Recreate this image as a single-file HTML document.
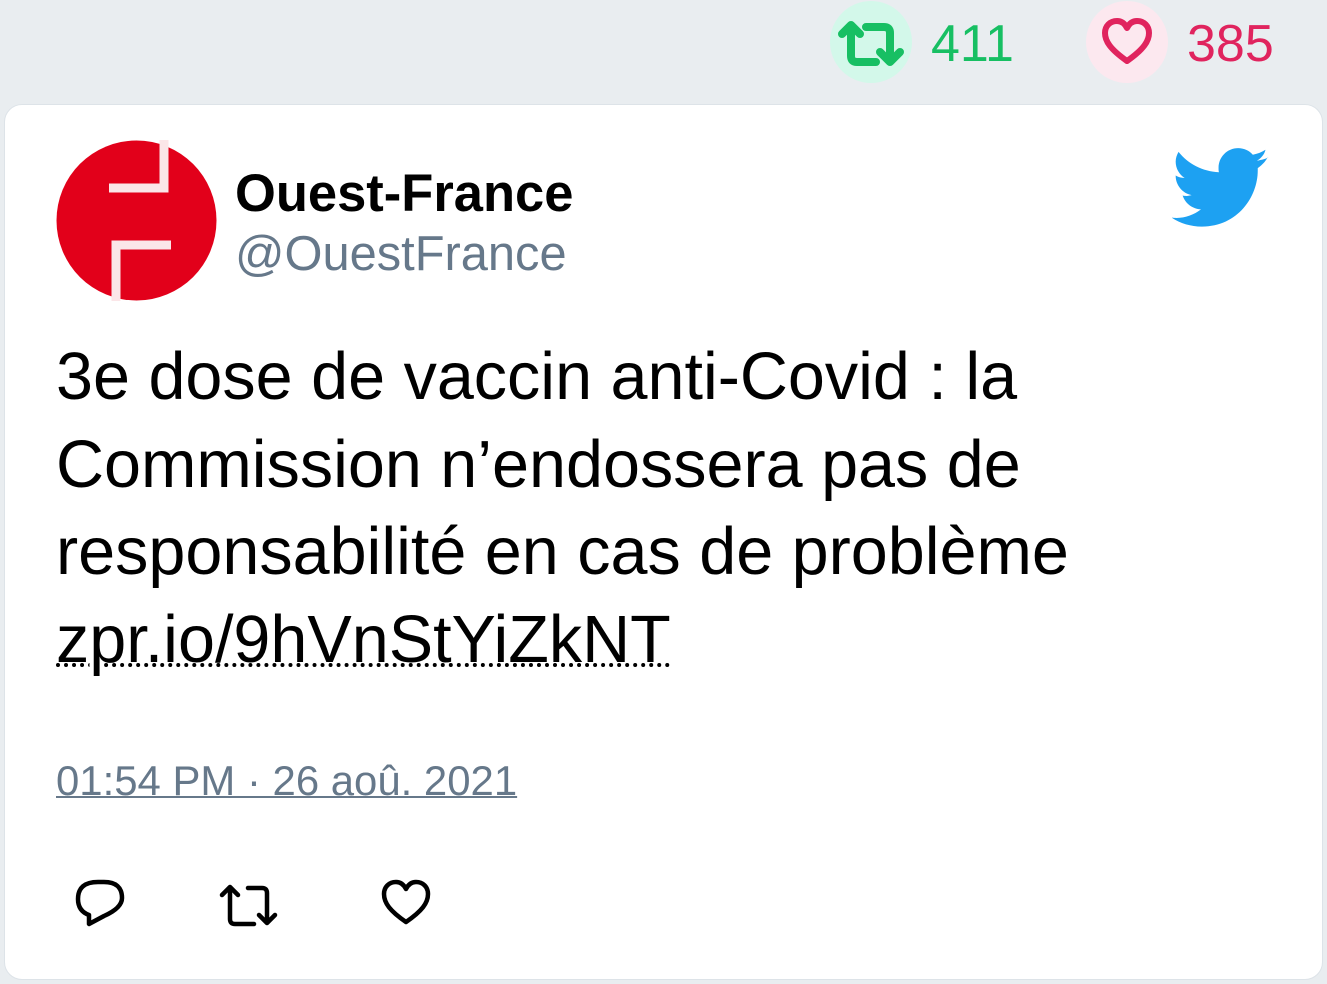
<!DOCTYPE html>
<html><head><meta charset="utf-8"><style>
html,body{margin:0;padding:0;width:1327px;height:984px;overflow:hidden;background:#e9edf0;font-family:"Liberation Sans",sans-serif}
.card{position:absolute;left:4px;top:104px;width:1319px;height:876px;background:#fff;border-radius:18px;border:1px solid #dde3e8;box-sizing:border-box}
.abs{position:absolute}
</style></head><body>
<div class="abs" style="left:830px;top:1px;width:82px;height:82px;border-radius:50%;background:#d3f8ea"></div>
<svg class="abs" style="left:836px;top:20px" width="70" height="48" viewBox="0 0 70 48" fill="none" stroke="#17bf63" stroke-width="8" stroke-linecap="round" stroke-linejoin="round">
<path d="M6 14 L15 5 L24 14 M15 6 V36 Q15 42 21 42 H40"/><path d="M30 7 H48 Q54 7 54 13 V40 M44 32 L54 42 L64 32"/></svg>
<div class="abs" style="left:931px;top:14px;font-size:52px;color:#17bf63">411</div>
<div class="abs" style="left:1086px;top:1px;width:82px;height:82px;border-radius:50%;background:#fce8ef"></div>
<svg class="abs" style="left:1100px;top:17px" width="54" height="50" viewBox="0 0 54 50"><path d="M27 44 C10 32 5 24 5 16 C5 9 10 4 17 4 C22 4 25 7 27 11 C29 7 32 4 37 4 C44 4 49 9 49 16 C49 24 44 32 27 44Z" fill="none" stroke="#e0245e" stroke-width="6" stroke-linejoin="round"/></svg>
<div class="abs" style="left:1187px;top:14px;font-size:52px;color:#e0245e">385</div>

<div class="card"></div>
<svg class="abs" style="left:56px;top:140px" width="161" height="161" viewBox="0 0 161 161">
<circle cx="80.5" cy="80.5" r="80" fill="#e2001a"/>
<path d="M53 48 H108 V0" fill="none" stroke="#fbe6e8" stroke-width="9"/>
<path d="M115 105 H60 V161" fill="none" stroke="#fbe6e8" stroke-width="9"/>
</svg>
<div class="abs" style="left:235px;top:163px;font-size:52.5px;font-weight:bold;color:#000">Ouest-France</div>
<div class="abs" style="left:235px;top:226px;font-size:48.8px;color:#66788a">@OuestFrance</div>
<svg class="abs" style="left:1172px;top:147px" width="98" height="84" viewBox="0 0 24 20"><path fill="#1da1f2" d="M23.6 2.3c-.9.4-1.8.6-2.8.8 1-.6 1.8-1.5 2.1-2.7-.9.6-2 1-3.1 1.2C18.9.6 17.6 0 16.2 0c-2.7 0-4.8 2.2-4.8 4.8 0 .4 0 .8.1 1.1C7.5 5.7 3.9 3.8 1.6.9c-.4.7-.7 1.5-.7 2.4 0 1.7.9 3.2 2.2 4-.8 0-1.5-.2-2.2-.6v.1c0 2.3 1.700 4.3 3.9 4.7-.4.1-.8.2-1.3.2-.3 0-.6 0-.9-.1.6 1.9 2.4 3.3 4.5 3.4-1.7 1.3-3.8 2.1-6 2.1-.4 0-.8 0-1.2-.1 2.1 1.4 4.7 2.200 7.4 2.2 8.9 0 13.7-7.4 13.7-13.7v-.6c1-.7 1.8-1.5 2.4-2.6z"/></svg>
<div class="abs" style="left:56px;top:334px;font-size:66.5px;line-height:87.5px;color:#000;width:1250px">3e dose de vaccin anti-Covid : la<br>Commission n’endossera pas de<br>responsabilité en cas de problème<br><span style="text-decoration:underline dotted;text-decoration-thickness:4px;text-underline-offset:2px">zpr.io/9hVnStYiZkNT</span></div>
<div class="abs" style="left:56px;top:757px;font-size:41.9px;color:#66788a;text-decoration:underline;text-decoration-thickness:2px">01:54 PM · 26 aoû. 2021</div>
<svg class="abs" style="left:74px;top:878px" width="54" height="54" viewBox="0 0 54 54" fill="none" stroke="#000" stroke-width="4.5" stroke-linejoin="round"><path d="M24 4 H30 Q48 4 48 20 Q48 30 30 38 L15 46 V37 Q4 33 4 21 Q4 4 24 4Z"/></svg>
<svg class="abs" style="left:218px;top:882px" width="66" height="48" viewBox="0 0 66 48" fill="none" stroke="#000" stroke-width="4.5" stroke-linecap="round" stroke-linejoin="round"><path d="M4 13 L12 5 L20 13 M12 6 V37 Q12 42 17 42 H36"/><path d="M30 6 H44 Q49 6 49 11 V40 M41 33 L49 41 L57 33"/></svg>
<svg class="abs" style="left:380px;top:878px" width="52" height="50" viewBox="0 0 52 50"><path d="M26 44 C10 33 4 25 4 16 C4 9 9 4 16 4 C21 4 24 7 26 11 C28 7 31 4 36 4 C43 4 48 9 48 16 C48 25 42 33 26 44Z" fill="none" stroke="#000" stroke-width="4.5" stroke-linejoin="round"/></svg>
</body></html>
